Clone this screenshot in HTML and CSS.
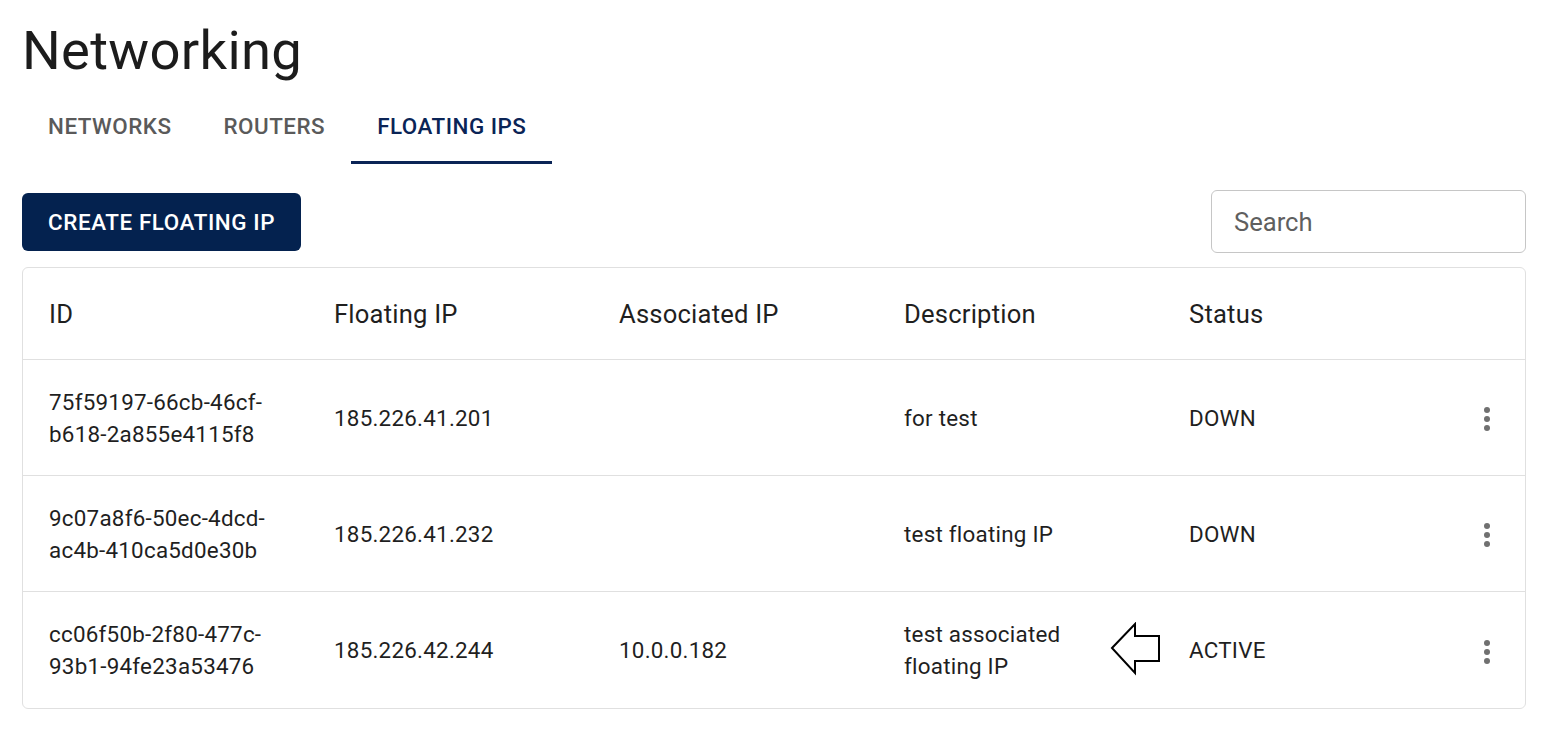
FILE: index.html
```html
<!DOCTYPE html>
<html lang="en">
<head>
<meta charset="utf-8">
<title>Networking</title>
<link rel="stylesheet" href="styles.css">
</head>
<body>
<div class="page">
  <h1 class="title">Networking</h1>
  <div class="tabs">
    <div class="tab">Networks</div>
    <div class="tab">Routers</div>
    <div class="tab active">Floating IPs</div>
  </div>
  <div class="toolbar">
    <button class="btn">Create Floating IP</button>
    <input class="search" type="text" placeholder="Search">
  </div>
  <div class="card">
    <table class="grid">
      <colgroup>
        <col class="c"><col class="c"><col class="c"><col class="c"><col class="c"><col class="act">
      </colgroup>
      <thead>
        <tr>
          <th>ID</th>
          <th>Floating IP</th>
          <th>Associated IP</th>
          <th>Description</th>
          <th>Status</th>
          <th></th>
        </tr>
      </thead>
      <tbody>
        <tr>
          <td>75f59197-66cb-46cf-b618-2a855e4115f8</td>
          <td>185.226.41.201</td>
          <td></td>
          <td>for test</td>
          <td>DOWN</td>
          <td class="menu"><svg width="8" height="26" viewBox="0 0 8 26"><circle cx="4" cy="4" r="3"/><circle cx="4" cy="13" r="3"/><circle cx="4" cy="22" r="3"/></svg></td>
        </tr>
        <tr>
          <td>9c07a8f6-50ec-4dcd-ac4b-410ca5d0e30b</td>
          <td>185.226.41.232</td>
          <td></td>
          <td>test floating IP</td>
          <td>DOWN</td>
          <td class="menu"><svg width="8" height="26" viewBox="0 0 8 26"><circle cx="4" cy="4" r="3"/><circle cx="4" cy="13" r="3"/><circle cx="4" cy="22" r="3"/></svg></td>
        </tr>
        <tr>
          <td>cc06f50b-2f80-477c-93b1-94fe23a53476</td>
          <td>185.226.42.244</td>
          <td>10.0.0.182</td>
          <td>test associated floating IP</td>
          <td class="status-cell">ACTIVE<svg class="pointer" width="52" height="54" viewBox="0 0 52 54"><path d="M2 26 L25 2 L25 14 L49 14 L49 39 L25 39 L25 51 Z" fill="#fff" stroke="#000" stroke-width="2" stroke-linejoin="miter"/></svg></td>
          <td class="menu"><svg width="8" height="26" viewBox="0 0 8 26"><circle cx="4" cy="4" r="3"/><circle cx="4" cy="13" r="3"/><circle cx="4" cy="22" r="3"/></svg></td>
        </tr>
      </tbody>
    </table>
  </div>
</div>
</body>
</html>
```

FILE: styles.css
```css
* { box-sizing: border-box; }
html, body { margin: 0; padding: 0; background: #fff; }
body {
  font-family: Roboto, "Liberation Sans", Arial, sans-serif;
  color: rgba(0,0,0,0.87);
}
.page {
  padding: 14px 16px 0 22px;
}
.title {
  margin: 0;
  font-size: 54.4px;
  font-weight: 400;
  line-height: 73px;
  letter-spacing: 0.3px;
  color: #1c1c1c;
}
.tabs {
  display: flex;
  height: 77px;
}
.tab {
  position: relative;
  display: flex;
  align-items: center;
  justify-content: center;
  padding: 0 26px;
  font-size: 22.4px;
  font-weight: 500;
  text-transform: uppercase;
  letter-spacing: 0.5px;
  color: #5a5a5a;
}
.tab.active { color: #0a2456; }
.tab.active::after {
  content: "";
  position: absolute;
  left: 0; right: 0; bottom: 0;
  height: 3px;
  background: #0a2456;
}
.toolbar {
  display: flex;
  justify-content: space-between;
  align-items: center;
  margin-top: 26px;
}
.btn {
  height: 58px;
  padding: 0 26px;
  border: none;
  border-radius: 6px;
  background: #04224f;
  color: #fff;
  font-family: inherit;
  font-size: 22.4px;
  font-weight: 500;
  letter-spacing: 0.6px;
  text-transform: uppercase;
}
.search {
  width: 315px;
  height: 63px;
  border: 1px solid #c6c6c6;
  border-radius: 6px;
  padding: 0 22px;
  font-family: inherit;
  font-size: 25.6px;
  color: rgba(0,0,0,0.87);
  outline: none;
}
.search::placeholder { color: #5f5f5f; opacity: 1; }
.card {
  margin-top: 14px;
  border: 1px solid #e0e0e0;
  border-radius: 6px;
  overflow: hidden;
}
.grid {
  width: 100%;
  border-collapse: collapse;
  table-layout: fixed;
}
.grid col.c { width: 285px; }
.grid col.act { width: auto; }
.grid th {
  height: 91px;
  padding: 2px 26px 0;
  text-align: left;
  font-size: 25.6px;
  font-weight: 400;
  letter-spacing: 0.2px;
  color: #1f1f1f;
  border-bottom: 1px solid #e0e0e0;
}
.grid td {
  height: 116px;
  padding: 1px 26px 0;
  font-size: 22.4px;
  line-height: 32px;
  letter-spacing: 0.24px;
  color: #1f1f1f;
  vertical-align: middle;
}
.grid tbody tr + tr td { border-top: 1px solid #e0e0e0; }
.grid tbody tr:last-child td { height: 117px; }
.grid td.menu {
  padding: 0;
  text-align: center;
}
.menu svg { display: inline-block; vertical-align: middle; fill: #707070; }
.status-cell { position: relative; }
.pointer {
  position: absolute;
  left: -53px;
  top: 50%;
  margin-top: -28px;
}
```
